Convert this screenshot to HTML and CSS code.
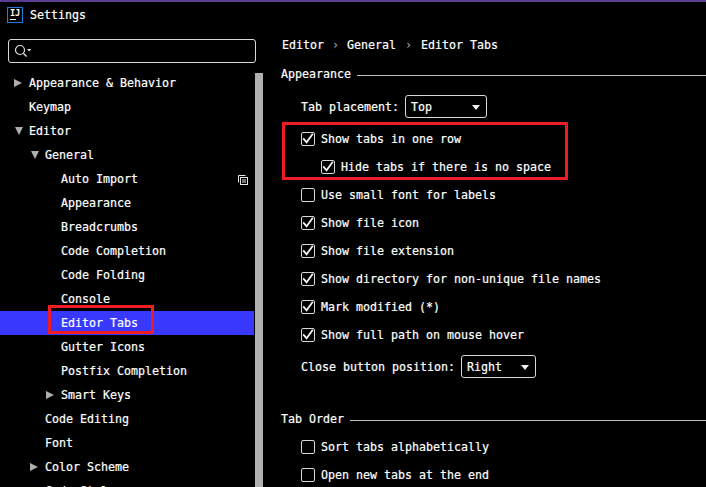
FILE: index.html

```html
<!DOCTYPE html>
<html lang="en">
<head>
  <meta charset="UTF-8">
  <title>Settings</title>
  <link rel="stylesheet" href="styles.css">
</head>
<body>
  <div class="window">
    <div class="title-bar">
      <span class="app-icon"><span class="app-letters">IJ</span><span class="app-bar"></span></span>
      <span class="title">Settings</span>
    </div>

    <div class="columns">
      <div class="sidebar">
        <div class="search">
          <svg class="search-icon" width="18" height="14" viewBox="0 0 18 14">
            <circle cx="6" cy="6" r="4.5" fill="none" stroke="#e0e0e0" stroke-width="1.2"/>
            <path d="M9.3 9.3 L12.6 12.6" stroke="#e0e0e0" stroke-width="1.4"/>
            <path d="M13 5 L17.4 5 L15.2 7.6 Z" fill="#e0e0e0"/>
          </svg>
        </div>
        <div class="tree-wrap">
          <ul class="tree">
            <li class="row lv0"><span class="arrow right"></span>Appearance &amp; Behavior</li>
            <li class="row lv0">Keymap</li>
            <li class="row lv0"><span class="arrow down"></span>Editor</li>
            <li class="row lv1"><span class="arrow down"></span>General</li>
            <li class="row lv2">Auto Import
              <svg class="copy-icon" width="10" height="10" viewBox="0 0 10 10">
                <path d="M0.5 7.5 V0.5 H7.5" fill="none" stroke="#e8e8e8"/>
                <rect x="2.5" y="2.5" width="7" height="7" fill="none" stroke="#e8e8e8"/>
                <path d="M4 5 H8 M4 7 H8" stroke="#e8e8e8"/>
              </svg>
            </li>
            <li class="row lv2">Appearance</li>
            <li class="row lv2">Breadcrumbs</li>
            <li class="row lv2">Code Completion</li>
            <li class="row lv2">Code Folding</li>
            <li class="row lv2">Console</li>
            <li class="row lv2 selected">Editor Tabs<span class="mark mark-tree"></span></li>
            <li class="row lv2">Gutter Icons</li>
            <li class="row lv2">Postfix Completion</li>
            <li class="row lv2"><span class="arrow right"></span>Smart Keys</li>
            <li class="row lv1">Code Editing</li>
            <li class="row lv1">Font</li>
            <li class="row lv1"><span class="arrow right"></span>Color Scheme</li>
            <li class="row lv1">Code Style</li>
          </ul>
          <div class="scrollbar"></div>
        </div>
      </div>

      <div class="content">
        <div class="crumbs">
          <span>Editor</span><span class="sep">›</span><span>General</span><span class="sep wide">›</span><span>Editor Tabs</span>
        </div>

        <div class="group-head first"><span>Appearance</span><i></i></div>

        <div class="field">
          <span>Tab placement:</span>
          <span class="select sel-top">Top<b class="caret"></b></span>
        </div>

        <div class="checks">
          <span class="mark mark-checks"></span>
          <label class="check on">Show tabs in one row</label>
          <label class="check on nested">Hide tabs if there is no space</label>
          <label class="check">Use small font for labels</label>
          <label class="check on">Show file icon</label>
          <label class="check on">Show file extension</label>
          <label class="check on">Show directory for non-unique file names</label>
          <label class="check on">Mark modified (*)</label>
          <label class="check on">Show full path on mouse hover</label>
        </div>

        <div class="field close-pos">
          <span>Close button position:</span>
          <span class="select sel-right">Right<b class="caret"></b></span>
        </div>

        <div class="group-head second"><span>Tab Order</span><i></i></div>

        <div class="checks order">
          <label class="check">Sort tabs alphabetically</label>
          <label class="check">Open new tabs at the end</label>
        </div>
      </div>
    </div>
  </div>
</body>
</html>
```

FILE: styles.css

```css
html, body {
  margin: 0;
  padding: 0;
  height: 100%;
  background: #000;
}

body {
  overflow: hidden;
  color: #fff;
  font-family: 'DejaVu Sans Mono', 'Liberation Mono', monospace;
  font-size: 11.63px;
  line-height: 16px;
  -webkit-text-stroke: 0.2px #fff;
}

.window {
  height: 487px;
  border-top: 2px solid #5a3e94;
  box-sizing: border-box;
  overflow: hidden;
}

.title-bar {
  display: flex;
  align-items: center;
  height: 26px;
  padding-left: 7px;
  gap: 7px;
}

.app-icon {
  width: 16px;
  height: 16px;
  box-sizing: border-box;
  border: 1px solid #1f7fe0;
  display: flex;
  flex-direction: column;
  align-items: center;
  overflow: hidden;
}

.app-letters {
  font-size: 8.5px;
  line-height: 10px;
  font-weight: bold;
  color: #fff;
  -webkit-text-stroke: 0;
}

.app-bar {
  width: 6px;
  height: 1px;
  margin: 1px 0 0 -5px;
  background: #fff;
}

.columns {
  display: flex;
}

.sidebar {
  width: 263px;
  flex: none;
}

.search {
  margin: 11px 7px 0 8px;
  height: 24px;
  box-sizing: border-box;
  border: 1px solid #d8d8d8;
  border-radius: 3px;
  display: flex;
  align-items: center;
  padding-left: 5px;
}

.tree-wrap {
  position: relative;
  margin-top: 8px;
}

.tree {
  list-style: none;
  margin: 0;
  padding: 0;
  width: 254px;
}

.row {
  position: relative;
  height: 24px;
  line-height: 24px;
  white-space: nowrap;
}

.lv0 { padding-left: 29px; }
.lv1 { padding-left: 45px; }
.lv2 { padding-left: 61px; }

.selected {
  background: #3838ff;
}

.arrow {
  position: absolute;
  top: 8px;
  width: 0;
  height: 0;
}

.arrow.right {
  margin-left: -15px;
  border-left: 8px solid #aeaeae;
  border-top: 4.5px solid transparent;
  border-bottom: 4.5px solid transparent;
}

.arrow.down {
  margin-left: -14px;
  top: 8px;
  border-top: 8px solid #aeaeae;
  border-left: 4.5px solid transparent;
  border-right: 4.5px solid transparent;
}

.copy-icon {
  position: absolute;
  left: 238px;
  top: 8px;
}

.scrollbar {
  position: absolute;
  left: 255px;
  top: 2px;
  width: 8px;
  height: 420px;
  background: #b0b0b0;
}

.mark {
  position: absolute;
  box-sizing: border-box;
  border: 3px solid #ee1c25;
}

.mark-tree {
  left: 48px;
  top: -6px;
  width: 106px;
  height: 29px;
}

.content {
  flex: 1;
  padding: 8px 0 0 18px;
}

.crumbs {
  display: flex;
  height: 16px;
  padding-left: 1px;
  padding-top: 1px;
}

.sep {
  width: 23px;
  text-align: center;
  color: #b0b0b0;
  -webkit-text-stroke: 0;
}

.sep.wide { width: 25px; }

.group-head {
  display: flex;
  align-items: center;
  gap: 6px;
}

.group-head i {
  flex: 1;
  height: 1px;
  background: #c0c0c0;
  margin-top: 2px;
}

.group-head.first { margin-top: 13px; }
.group-head.second { margin-top: 33px; }

.field {
  display: flex;
  align-items: center;
  gap: 6px;
  padding-left: 20px;
  height: 23px;
  margin-top: 13px;
}

.select {
  position: relative;
  height: 23px;
  line-height: 22px;
  box-sizing: border-box;
  border: 1px solid #d8d8d8;
  border-radius: 3px;
  padding-left: 5px;
}

.sel-top { width: 82px; }
.sel-right { width: 75px; }

.caret {
  position: absolute;
  right: 6px;
  top: 9px;
  border-top: 5px solid #f0f0f0;
  border-left: 4.5px solid transparent;
  border-right: 4.5px solid transparent;
}

.checks {
  position: relative;
  margin-top: 7px;
}

.checks.order { margin-top: 6px; }

.mark-checks {
  left: 1px;
  top: -3px;
  width: 286px;
  height: 58px;
}

.check {
  display: flex;
  align-items: center;
  height: 28px;
  padding-left: 40px;
  position: relative;
}

.check::before {
  content: "";
  position: absolute;
  left: 20px;
  top: 7px;
  width: 14px;
  height: 14px;
  box-sizing: border-box;
  border: 1px solid #d8d8d8;
  border-radius: 2px;
}

.check.on::before {
  background: url("data:image/svg+xml,%3Csvg xmlns='http://www.w3.org/2000/svg' width='12' height='12'%3E%3Cpath d='M1.2 5.4 L4.6 9.4 L10.8 0.8' fill='none' stroke='%23f4f4f4' stroke-width='1.8'/%3E%3C/svg%3E") no-repeat center;
}

.check.nested { padding-left: 60px; }
.check.nested::before { left: 40px; }

.close-pos { margin-top: 6px; }
```
